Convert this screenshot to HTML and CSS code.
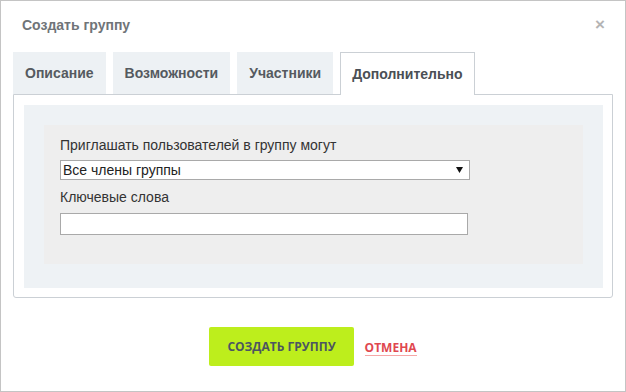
FILE: index.html
```html
<!DOCTYPE html>
<html lang="ru">
<head>
    <meta charset="UTF-8">
    <meta name="viewport" content="width=device-width, initial-scale=1.0">
    <title>Создать группу</title>
    <link rel="stylesheet" href="styles.css">
</head>
<body>

<div class="dialog">
    <!-- Header -->
    <div class="dialog-header">
        <span class="dialog-title">Создать группу</span>
        <span class="close-btn">&times;</span>
    </div>

    <!-- Tabs -->
    <div class="tabs">
        <div class="tab">Описание</div>
        <div class="tab">Возможности</div>
        <div class="tab">Участники</div>
        <div class="tab active">Дополнительно</div>
    </div>

    <div class="tab-panel">
        <div class="panel-inner">
            <div class="field-box">
                <div class="field-label">Приглашать пользователей в группу могут</div>
                <div class="select-box">
                    <span>Все члены группы</span>
                    <svg class="select-arrow" width="7" height="6" viewBox="0 0 7 6">
                        <path d="M0 0 H7 L3.5 6 Z" fill="#111"/>
                    </svg>
                </div>
                <div class="field-label second">Ключевые слова</div>
                <input class="text-input" type="text">
            </div>
        </div>
    </div>

    <!-- Footer buttons -->
    <div class="dialog-footer">
        <button class="create-btn">Создать группу</button>
        <a class="cancel-link" href="#">Отмена</a>
    </div>
</div>

</body>
</html>
```

FILE: styles.css
```css
body {
    margin: 0;
    font-family: "Liberation Sans", Arial, sans-serif;
    background-color: #ffffff;
}

.dialog {
    width: 626px;
    height: 392px;
    box-sizing: border-box;
    border: 1px solid #c4c4c4;
    background-color: #ffffff;
    padding: 0 12px;
}

.dialog-header {
    display: flex;
    justify-content: space-between;
    align-items: center;
    padding: 14px 9px 17px 9px;
    height: 20px;
}

.dialog-title {
    font-size: 14px;
    font-weight: bold;
    color: #707478;
    line-height: 20px;
}

.close-btn {
    font-size: 17px;
    font-weight: bold;
    color: #b4b4b4;
    line-height: 20px;
    margin-right: -1px;
}

/* Tabs */
.tabs {
    display: flex;
    gap: 7px;
}

.tab {
    height: 42px;
    line-height: 42px;
    padding: 0 12px;
    background-color: #edf1f4;
    font-size: 14px;
    font-weight: bold;
    color: #555a60;
}

.tab.active {
    position: relative;
    z-index: 1;
    background-color: #ffffff;
    border: 1px solid #cbd0d5;
    border-bottom: none;
    padding: 0 11px;
    margin-bottom: -1px;
    color: #4a4f55;
}

.tab-panel {
    border: 1px solid #cbd0d5;
    border-radius: 0 0 3px 3px;
    padding: 10px 9px 9px 10px;
}

.panel-inner {
    background-color: #eef2f5;
    padding: 20px 20px 24px 20px;
}

.field-box {
    background-color: #eeeeee;
    padding: 12px 16px 29px 16px;
}

.field-label {
    font-size: 14px;
    line-height: 16px;
    color: #333333;
    margin-bottom: 7px;
}

.field-label.second {
    margin-top: 9px;
    margin-bottom: 8px;
}

.select-box {
    width: 410px;
    height: 20px;
    box-sizing: border-box;
    border: 1px solid #a9a9a9;
    background-color: #ffffff;
    display: flex;
    align-items: center;
    justify-content: space-between;
    padding: 0 6px 0 2px;
    font-size: 14px;
    color: #222222;
}

.text-input {
    display: block;
    width: 408px;
    height: 22px;
    box-sizing: border-box;
    border: 1px solid #a9a9a9;
    background-color: #ffffff;
    margin: 0;
    padding: 0 4px;
}

/* Footer */
.dialog-footer {
    display: flex;
    justify-content: center;
    align-items: center;
    gap: 11px;
    margin-top: 29px;
}

.create-btn {
    height: 39px;
    padding: 0 18px;
    border: none;
    border-radius: 2px;
    background-color: #bdee1c;
    font-family: "Open Sans", sans-serif;
    font-size: 12px;
    font-weight: bold;
    text-transform: uppercase;
    color: #4c5561;
    cursor: pointer;
}

.cancel-link {
    font-family: "Open Sans", sans-serif;
    font-size: 12px;
    font-weight: bold;
    text-transform: uppercase;
    color: #e0474f;
    text-decoration: none;
    border-bottom: 1px solid #f6a7a7;
    line-height: 15px;
    margin-top: 2px;
}
```
